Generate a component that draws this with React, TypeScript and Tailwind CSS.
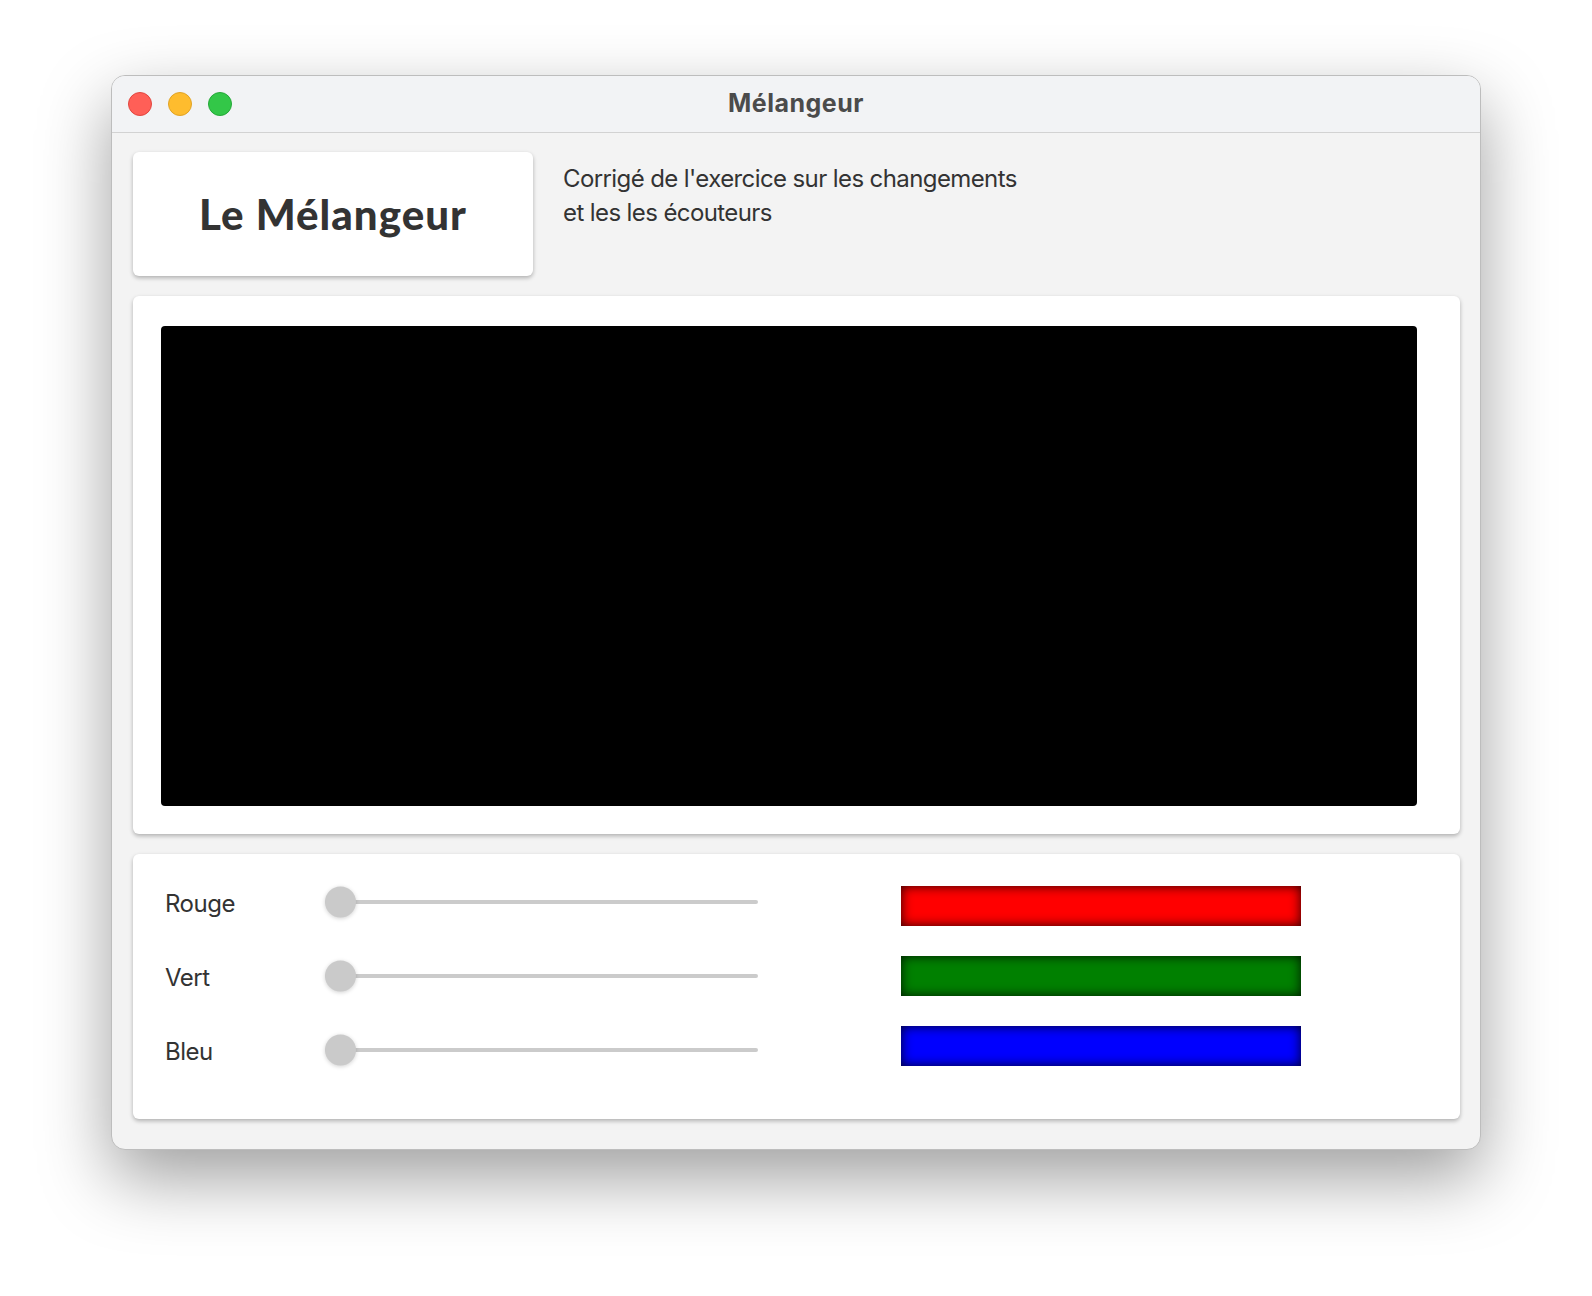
import React from 'react';

const channels = [
  { label: 'Rouge', bar: 'bg-[#ff0000]' },
  { label: 'Vert', bar: 'bg-[#008000]' },
  { label: 'Bleu', bar: 'bg-[#0000ff]' },
];

const Slider = () => (
  <div className="relative flex h-8 w-[433px] items-center">
    <div className="h-1 w-full rounded-full bg-[#cbcbcb]" />
    {/* thumb sits at value 0 */}
    <div className="absolute left-0 top-1/2 h-[31px] w-[31px] -translate-y-1/2 rounded-full bg-[#cacaca] shadow-[0_1px_4px_rgba(0,0,0,0.18)]" />
  </div>
);

const App = () => {
  return (
    <div className="min-h-screen bg-white pl-[111px] pt-[75px] font-['Inter',sans-serif]">
      <div className="flex h-[1075px] w-[1370px] flex-col overflow-hidden rounded-[14px] border border-[#bdbdbd] bg-[#f3f3f3] shadow-[0_28px_70px_rgba(0,0,0,0.38)]">
        {/* Title bar */}
        <div className="grid h-[57px] shrink-0 grid-cols-[1fr_auto_1fr] items-center border-b border-[#d2d2d2] bg-[#f2f3f5] px-4">
          <div className="flex items-center gap-4">
            <span className="h-6 w-6 rounded-full border border-[#e2463f] bg-[#ff5f57]" />
            <span className="h-6 w-6 rounded-full border border-[#e1a325] bg-[#febc2e]" />
            <span className="h-6 w-6 rounded-full border border-[#25a838] bg-[#33c748]" />
          </div>
          <div className="text-[25px] font-bold tracking-[0.02em] text-[#4b4b4b]">Mélangeur</div>
          <div />
        </div>

        {/* Content */}
        <div className="flex flex-1 flex-col pb-[30px] pl-[21px] pr-5 pt-[19px]">
          <div className="flex items-start">
            <div className="flex h-[124px] w-[400px] items-center justify-center rounded-md bg-white shadow-[0_2px_4px_rgba(0,0,0,0.28)]">
              <h1 className="font-['Lato',sans-serif] text-[42px] font-black tracking-[0.025em] text-[#333333]">Le Mélangeur</h1>
            </div>
            <p className="ml-[30px] mt-[10px] text-[24px] leading-[33.5px] tracking-[-0.025em] text-[#333333]">
              Corrigé de l'exercice sur les changements
              <br />
              et les les écouteurs
            </p>
          </div>

          <div className="mt-5 h-[538px] rounded-md bg-white pl-[28px] pt-[30px] shadow-[0_2px_4px_rgba(0,0,0,0.28)]">
            <div className="h-[480px] w-[1256px] rounded bg-black" />
          </div>

          <div className="mt-5 flex flex-1 rounded-md bg-white pl-[32px] pt-[32px] shadow-[0_2px_4px_rgba(0,0,0,0.28)]">
            <div className="flex flex-col gap-[42px]">
              {channels.map((c) => (
                <div key={c.label} className="flex h-8 items-center">
                  <span className="w-[160px] pt-1 text-[24px] tracking-[-0.02em] text-[#333333]">{c.label}</span>
                  <Slider />
                </div>
              ))}
            </div>
            <div className="ml-[143px] flex flex-col gap-[30px]">
              {channels.map((c) => (
                <div
                  key={c.label}
                  className={`h-10 w-[400px] ${c.bar} shadow-[inset_0_0_12px_rgba(0,0,0,0.85)]`}
                />
              ))}
            </div>
          </div>
        </div>
      </div>
    </div>
  );
};

export default App;
